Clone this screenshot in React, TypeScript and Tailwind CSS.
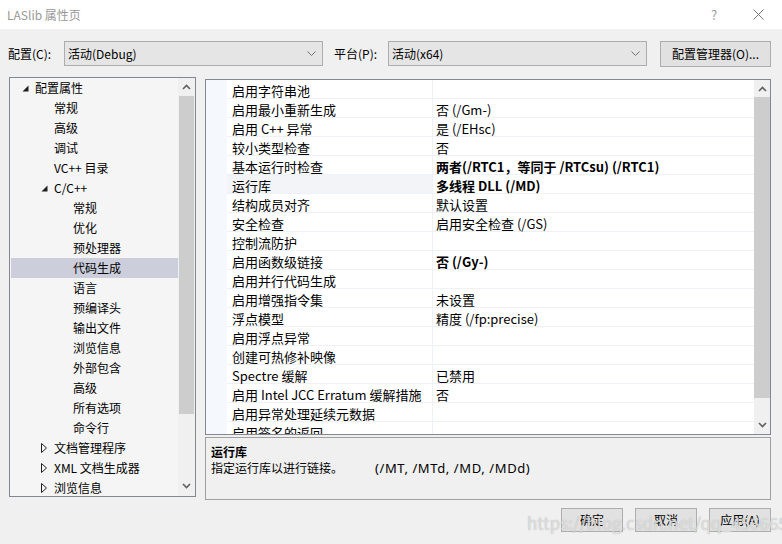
import React from 'react';

type TreeItem = { label: string; level: number; arrow?: 'open' | 'closed'; selected?: boolean };

const treeItems: TreeItem[] = [
  { label: '配置属性', level: 0, arrow: 'open' },
  { label: '常规', level: 1 },
  { label: '高级', level: 1 },
  { label: '调试', level: 1 },
  { label: 'VC++ 目录', level: 1 },
  { label: 'C/C++', level: 1, arrow: 'open' },
  { label: '常规', level: 2 },
  { label: '优化', level: 2 },
  { label: '预处理器', level: 2 },
  { label: '代码生成', level: 2, selected: true },
  { label: '语言', level: 2 },
  { label: '预编译头', level: 2 },
  { label: '输出文件', level: 2 },
  { label: '浏览信息', level: 2 },
  { label: '外部包含', level: 2 },
  { label: '高级', level: 2 },
  { label: '所有选项', level: 2 },
  { label: '命令行', level: 2 },
  { label: '文档管理程序', level: 1, arrow: 'closed' },
  { label: 'XML 文档生成器', level: 1, arrow: 'closed' },
  { label: '浏览信息', level: 1, arrow: 'closed' },
];

type Prop = { name: string; value?: string; bold?: boolean; current?: boolean };

const props: Prop[] = [
  { name: '启用字符串池' },
  { name: '启用最小重新生成', value: '否 (/Gm-)' },
  { name: '启用 C++ 异常', value: '是 (/EHsc)' },
  { name: '较小类型检查', value: '否' },
  { name: '基本运行时检查', value: '两者(/RTC1，等同于 /RTCsu) (/RTC1)', bold: true },
  { name: '运行库', value: '多线程 DLL (/MD)', bold: true, current: true },
  { name: '结构成员对齐', value: '默认设置' },
  { name: '安全检查', value: '启用安全检查 (/GS)' },
  { name: '控制流防护' },
  { name: '启用函数级链接', value: '否 (/Gy-)', bold: true },
  { name: '启用并行代码生成' },
  { name: '启用增强指令集', value: '未设置' },
  { name: '浮点模型', value: '精度 (/fp:precise)' },
  { name: '启用浮点异常' },
  { name: '创建可热修补映像' },
  { name: 'Spectre 缓解', value: '已禁用' },
  { name: '启用 Intel JCC Erratum 缓解措施', value: '否' },
  { name: '启用异常处理延续元数据' },
  { name: '启用签名的返回' },
];

function Chevron({ up = false }: { up?: boolean }) {
  return (
    <svg width="9" height="6" viewBox="0 0 9 6" aria-hidden="true">
      <path
        d={up ? 'M1 5L4.5 1.5L8 5' : 'M1 1L4.5 4.5L8 1'}
        fill="none"
        stroke="#606060"
        strokeWidth="1.6"
      />
    </svg>
  );
}

function ComboBox({ text }: { text: string }) {
  return (
    <div className="w-[259px] h-[25px] border border-[#adadad] bg-[#e5e5e5] flex items-center pl-[3px] pr-[6px]">
      <span className="flex-1">{text}</span>
      <svg width="9" height="5" viewBox="0 0 9 5" aria-hidden="true">
        <path d="M0.5 0.5L4.5 4.5L8.5 0.5" fill="none" stroke="#707070" strokeWidth="1" />
      </svg>
    </div>
  );
}

function TreeArrow({ kind }: { kind?: 'open' | 'closed' }) {
  if (kind === 'open') {
    return (
      <svg width="7" height="7" viewBox="0 0 7 7" aria-hidden="true">
        <path d="M6.5 0.5V6.5H0.5Z" fill="#1e1e1e" />
      </svg>
    );
  }
  if (kind === 'closed') {
    return (
      <svg width="6" height="10" viewBox="0 0 6 10" aria-hidden="true">
        <path d="M0.5 0.5L5.5 5L0.5 9.5Z" fill="none" stroke="#1e1e1e" strokeWidth="1" />
      </svg>
    );
  }
  return null;
}

export default function App() {
  return (
    <div className="relative w-[782px] h-[544px] bg-[#f0f0f0] flex flex-col text-[12px] text-black font-['Noto_Sans_CJK_SC','Noto_Sans',sans-serif] overflow-hidden">
      {/* title bar */}
      <div className="h-[29px] bg-white flex items-center pl-[7px]">
        <span className="flex-1 text-[#999999]">LASlib 属性页</span>
        <span className="w-[12px] text-[#999999] text-[13px]">?</span>
        <div className="w-[59px] flex justify-end pr-[18px]">
          <svg width="11" height="11" viewBox="0 0 11 11" aria-hidden="true">
            <path d="M0.5 0.5L10.5 10.5M10.5 0.5L0.5 10.5" stroke="#777" strokeWidth="1" />
          </svg>
        </div>
      </div>

      {/* config row */}
      <div className="mt-[12px] h-[25px] flex items-center pl-[8px]">
        <span className="w-[56px]">配置(C):</span>
        <ComboBox text="活动(Debug)" />
        <span className="ml-[11px] w-[54px]">平台(P):</span>
        <ComboBox text="活动(x64)" />
        <button className="ml-[13px] w-[111px] h-[26px] border border-[#adadad] bg-[#e1e1e1] text-[12px]">
          配置管理器(O)...
        </button>
      </div>

      <div className="mt-[11px] flex">
        {/* tree */}
        <div className="ml-[9px] w-[187px] h-[420px] border border-[#828790] bg-[#f5f5f5] flex overflow-hidden">
          <div className="flex-1 flex flex-col">
            {treeItems.map((it, i) => (
              <div
                key={i}
                className={
                  it.selected
                    ? 'h-[20px] shrink-0 flex items-center ml-[1px] bg-[#cccedb]'
                    : 'h-[20px] shrink-0 flex items-center ml-[1px]'
                }
              >
                <div
                  className={
                    it.level === 0
                      ? 'w-[24px] pl-[11px] flex items-center'
                      : it.level === 1
                        ? 'w-[43px] pl-[30px] flex items-center'
                        : 'w-[62px] pl-[49px] flex items-center'
                  }
                >
                  <TreeArrow kind={it.arrow} />
                </div>
                <span className="whitespace-nowrap">{it.label}</span>
              </div>
            ))}
          </div>
          <div className="w-[17px] bg-[#f0f0f0] flex flex-col">
            <div className="h-[18px] flex items-center justify-center">
              <Chevron up />
            </div>
            <div className="h-[318px] bg-[#cdcdcd] mx-[1px]" />
            <div className="flex-1" />
            <div className="h-[20px] flex items-center justify-center">
              <Chevron />
            </div>
          </div>
        </div>

        <div className="ml-[9px] w-[566px] flex flex-col">
          {/* property grid */}
          <div className="mt-[2px] h-[356px] border border-[#828790] bg-white flex overflow-hidden">
            <div className="w-[21px] bg-[#f5f8fc]" />
            <div className="flex-1 flex flex-col">
              {props.map((p, i) => (
                <div key={i} className="h-[19px] shrink-0 flex border-b border-[#eef1f7] text-[13px] leading-[15px]">
                  <div
                    className={
                      p.current
                        ? 'w-[205px] pl-[5px] pt-[3px] bg-[#f2f4f8] whitespace-nowrap'
                        : 'w-[205px] pl-[5px] pt-[3px] whitespace-nowrap'
                    }
                  >
                    {p.name}
                  </div>
                  <div className="w-px bg-[#eef1f7]" />
                  <div
                    className={
                      p.bold
                        ? 'flex-1 pl-[3px] pt-[3px] font-bold whitespace-nowrap'
                        : 'flex-1 pl-[3px] pt-[3px] whitespace-nowrap'
                    }
                  >
                    {p.value ?? ''}
                  </div>
                </div>
              ))}
            </div>
            <div className="w-[16px] bg-[#f0f0f0] flex flex-col">
              <div className="h-[17px] flex items-center justify-center">
                <Chevron up />
              </div>
              <div className="h-[301px] bg-[#cdcdcd]" />
              <div className="flex-1" />
              <div className="h-[18px] flex items-center justify-center">
                <Chevron />
              </div>
            </div>
          </div>

          {/* description */}
          <div className="mt-[2px] h-[63px] border border-[#a0a0a0] bg-[#f0f0f0] pl-[5px] pt-[6px] leading-[16px]">
            <div className="font-bold">运行库</div>
            <div className="flex items-center">
              <span className="w-[164px]">指定运行库以进行链接。</span>
              <span className="font-['Noto_Sans',sans-serif] text-[13px] tracking-[0.6px]">(/MT, /MTd, /MD, /MDd)</span>
            </div>
          </div>
        </div>
      </div>

      {/* buttons */}
      <div className="mt-[8px] flex justify-end gap-[12px] pr-[11px]">
        <button className="w-[62px] h-[24px] border border-[#adadad] bg-[#e1e1e1]">确定</button>
        <button className="w-[62px] h-[24px] border border-[#adadad] bg-[#e1e1e1]">取消</button>
        <button className="w-[62px] h-[24px] border border-[#adadad] bg-[#e1e1e1]">应用(A)</button>
      </div>

      {/* watermark */}
      <div className="absolute left-[527px] top-[510px] text-[17px] text-white/60 [text-shadow:0_0_1px_#a0a0a0] whitespace-nowrap pointer-events-none">
        https://blog.csdn.net/qq_45666590
      </div>
    </div>
  );
}
